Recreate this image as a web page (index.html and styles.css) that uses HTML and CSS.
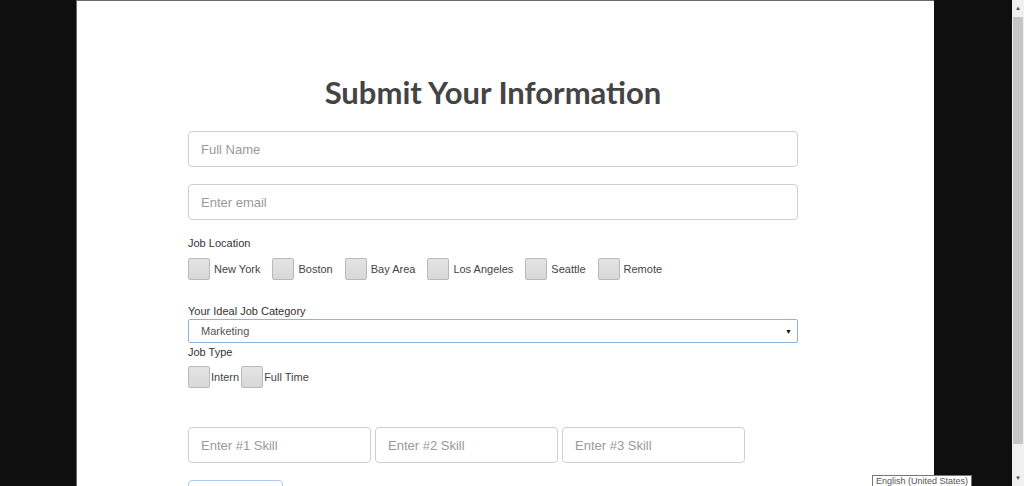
FILE: index.html
```html
<!DOCTYPE html>
<html>
<head>
<meta charset="utf-8">
<link rel="stylesheet" href="styles.css">
</head>
<body>
<div class="frame">
  <div class="side"></div>
  <div class="panel">
    <form class="form">
      <h1 class="title">Submit Your Information</h1>
      <div class="field"><div class="input">Full Name</div></div>
      <div class="field"><div class="input">Enter email</div></div>
      <div class="label">Job Location</div>
      <div class="checks locations">
        <span class="opt"><span class="box"></span><span class="txt">New York</span></span>
        <span class="opt"><span class="box"></span><span class="txt">Boston</span></span>
        <span class="opt"><span class="box"></span><span class="txt">Bay Area</span></span>
        <span class="opt"><span class="box"></span><span class="txt">Los Angeles</span></span>
        <span class="opt"><span class="box"></span><span class="txt">Seattle</span></span>
        <span class="opt"><span class="box"></span><span class="txt">Remote</span></span>
      </div>
      <div class="label label-cat">Your Ideal Job Category</div>
      <div class="select"><span>Marketing</span><span class="arrow">&#9660;</span></div>
      <div class="label label-type">Job Type</div>
      <div class="checks types">
        <span class="opt tight"><span class="box"></span><span class="txt">Intern</span></span>
        <span class="opt tight"><span class="box"></span><span class="txt">Full Time</span></span>
      </div>
      <div class="skills">
        <div class="input skill">Enter #1 Skill</div>
        <div class="input skill">Enter #2 Skill</div>
        <div class="input skill">Enter #3 Skill</div>
      </div>
      <div class="button"></div>
    </form>
  </div>
  <div class="side right"></div>
  <div class="scrollbar">
    <div class="sb-arrow up">&#9650;</div>
    <div class="sb-thumb"></div>
    <div class="sb-arrow down">&#9660;</div>
  </div>
</div>
<div class="tooltip">English (United States)</div>
</body>
</html>
```
FILE: styles.css
```css
html, body {
  margin: 0;
  padding: 0;
  width: 1024px;
  height: 486px;
  overflow: hidden;
  background: #0f0f0f;
  font-family: "Liberation Sans", Arial, sans-serif;
}
.frame {
  display: flex;
  height: 486px;
}
.side {
  width: 76px;
  background: #0f0f0f;
  flex: none;
}
.side.right {
  width: 78px;
}
.panel {
  width: 858px;
  flex: none;
  background: #fff;
  border-top: 1px solid #6a6a6a;
  border-left: 1px solid #6a6a6a;
  box-sizing: border-box;
  overflow: hidden;
}
.form {
  width: 610px;
  margin-left: 111px;
  padding-top: 73px;
}
.title {
  margin: 0 0 21px 0;
  font-family: Lato, sans-serif;
  font-weight: 700;
  font-size: 31px;
  line-height: 36px;
  color: #444;
  text-align: center;
}
.field {
  margin-bottom: 17px;
}
.input {
  height: 36px;
  box-sizing: border-box;
  border: 1px solid #cfcfcf;
  border-radius: 4px;
  padding-left: 12px;
  font-size: 13px;
  line-height: 35px;
  color: #999;
  background: #fff;
}
.label {
  font-size: 11px;
  line-height: 13px;
  color: #333;
}
.checks {
  display: flex;
  align-items: center;
  margin-top: 8px;
  height: 22px;
}
.opt {
  display: flex;
  align-items: center;
  margin-right: 12px;
}
.opt.tight {
  margin-right: 0;
}
.box {
  width: 22px;
  height: 22px;
  box-sizing: border-box;
  border: 1px solid #b9b9b9;
  border-radius: 2px;
  background: linear-gradient(#e4e4e4, #d8d8d8);
}
.txt {
  font-size: 11px;
  color: #444;
  margin-left: 4px;
}
.tight .txt {
  margin-left: 1px;
  margin-right: 2px;
}
.label-cat {
  margin-top: 25px;
}
.select {
  margin-top: 1px;
  height: 24px;
  box-sizing: border-box;
  border: 1px solid #8fb4dc;
  border-radius: 2px;
  display: flex;
  align-items: center;
  justify-content: space-between;
  padding: 0 5px 0 12px;
  font-size: 11px;
  color: #555;
}
.arrow {
  font-size: 7px;
  color: #111;
}
.label-type {
  margin-top: 3px;
}
.types {
  margin-top: 7px;
}
.skills {
  display: flex;
  gap: 4px;
  margin-top: 39px;
  width: 560px;
}
.skill {
  width: 183px;
  flex: none;
}
.button {
  margin-top: 17px;
  width: 95px;
  height: 30px;
  box-sizing: border-box;
  border: 1px solid #a9cdea;
  border-radius: 4px;
}
.scrollbar {
  width: 12px;
  flex: none;
  background: #f0f0f0;
  display: flex;
  flex-direction: column;
  align-items: center;
}
.sb-arrow {
  height: 16px;
  font-size: 6px;
  line-height: 16px;
  color: #505050;
}
.sb-thumb {
  width: 10px;
  flex: 1;
  background: #c6c6c6;
  margin: 1px 0 26px 0;
}
.tooltip {
  position: absolute;
  left: 872px;
  top: 475px;
  padding: 0 3px;
  height: 11px;
  border: 1px solid #767676;
  border-bottom: none;
  background: #fff;
  font-family: "Liberation Sans", Arial, sans-serif;
  font-size: 9px;
  line-height: 11px;
  color: #575757;
}
```
